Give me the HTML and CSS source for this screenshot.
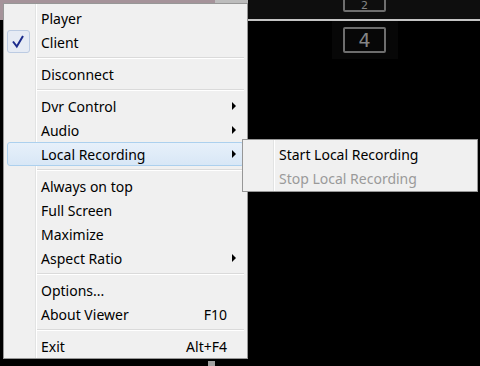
FILE: index.html
```html
<!DOCTYPE html>
<html lang="en">
<head>
  <meta charset="UTF-8" />
  <meta name="viewport" content="width=device-width, initial-scale=1.0" />
  <title>Viewer</title>
  <link rel="stylesheet" href="styles.css">
</head>
<body>
  <div class="screen">
    <!-- video frame behind the menu -->
    <div class="frame-strip"></div>
    <div class="frame-strip-light"></div>
    <div class="channel-bar"></div>
    <div class="channel-glow"></div>
    <div class="channel ch-2">2</div>
    <div class="channel ch-4">4</div>
    <div class="frame-tab"></div>

    <ul class="menu main-menu">
      <li class="item">Player</li>
      <li class="item">
        <span class="check">
          <svg width="23" height="23" viewBox="0 0 23 23"><path d="M6 11.5 L9.8 16.5 L16 6" fill="none" stroke="#1b2b8c" stroke-width="2" stroke-linejoin="miter"/></svg>
        </span>
        Client
      </li>
      <li class="sep"></li>
      <li class="item">Disconnect</li>
      <li class="sep"></li>
      <li class="item has-sub">Dvr Control</li>
      <li class="item has-sub">Audio</li>
      <li class="item has-sub active">Local Recording</li>
      <li class="sep"></li>
      <li class="item">Always on top</li>
      <li class="item">Full Screen</li>
      <li class="item">Maximize</li>
      <li class="item has-sub">Aspect Ratio</li>
      <li class="sep"></li>
      <li class="item">Options...</li>
      <li class="item"><span class="label">About Viewer</span><span class="shortcut">F10</span></li>
      <li class="sep"></li>
      <li class="item"><span class="label">Exit</span><span class="shortcut">Alt+F4</span></li>
    </ul>

    <ul class="menu sub-menu">
      <li class="item">Start Local Recording</li>
      <li class="item disabled">Stop Local Recording</li>
    </ul>
  </div>
</body>
</html>
```

FILE: styles.css
```css
/* Global */
body {
  margin: 0;
  padding: 0;
  background: #000;
  font-family: "Noto Sans", "Open Sans", sans-serif;
  font-size: 14px;
  color: #000;
}

.screen {
  position: relative;
  width: 480px;
  height: 366px;
  overflow: hidden;
  background: #000;
}

/* Video frame pieces */
.frame-strip {
  position: absolute;
  left: 0;
  top: 0;
  width: 215px;
  height: 20px;
  background: #a5939a;
}

.frame-strip-light {
  position: absolute;
  left: 215px;
  top: 0;
  width: 33px;
  height: 20px;
  background: #bdbdbd;
}

.channel-bar {
  position: absolute;
  left: 248px;
  top: 0;
  width: 232px;
  height: 19px;
  background: #0e0e0e;
  border-bottom: 2px solid #c4c4c4;
}

.channel-glow {
  position: absolute;
  left: 332px;
  top: 21px;
  width: 66px;
  height: 38px;
  background: #070707;
}

.channel {
  position: absolute;
  left: 343px;
  width: 43px;
  border: 2px solid #6e6e6e;
  border-radius: 2px;
  box-sizing: border-box;
  color: #858585;
  font-family: "DejaVu Sans", sans-serif;
  font-size: 19px;
  text-align: center;
}

.ch-2 {
  top: -2px;
  height: 14px;
  font-size: 11px;
  line-height: 11px;
}

.ch-4 {
  top: 27px;
  height: 26px;
  line-height: 22px;
}

.frame-tab {
  position: absolute;
  left: 208px;
  top: 361px;
  width: 7px;
  height: 5px;
  background: #a0a0a0;
}

/* Menus */
.menu {
  position: absolute;
  list-style: none;
  margin: 0;
  box-sizing: border-box;
  background: #f0f0f0;
  border: 1px solid #979797;
}

.menu::before {
  content: '';
  position: absolute;
  top: 0;
  bottom: 0;
  left: 31px;
  width: 1px;
  background: #e2e3e3;
  box-shadow: 1px 0 0 #fff;
}

.main-menu {
  left: 3px;
  top: 3px;
  width: 245px;
  padding: 2px 3px 0 3px;
}

.sub-menu {
  left: 242px;
  top: 139px;
  width: 236px;
  padding: 2px 3px 1px 3px;
}

.sub-menu::before {
  left: 30px;
}

.item {
  position: relative;
  display: flex;
  height: 24px;
  line-height: 23px;
  padding: 0 16px 0 33px;
  border: 1px solid transparent;
  border-radius: 3px;
  box-sizing: border-box;
  white-space: nowrap;
}

.sub-menu .item {
  padding-left: 32px;
}

.item .label {
  flex: 1;
}

.item .shortcut {
  text-align: right;
}

.item.active {
  background: linear-gradient(to bottom, #e7f0fa, #d8e7f6);
  border-color: #acd0ee;
}

.item.disabled {
  color: #9a9a9a;
}

/* Submenu arrow */
.has-sub::after {
  content: '';
  position: absolute;
  right: 7px;
  top: 7px;
  width: 0;
  height: 0;
  border-left: 4px solid #000;
  border-top: 4px solid transparent;
  border-bottom: 4px solid transparent;
}

/* Checked item */
.check {
  position: absolute;
  left: -1px;
  top: -1px;
  width: 23px;
  height: 23px;
  box-sizing: border-box;
  background: #e6ebf4;
  border: 1px solid #bccbe2;
  border-radius: 3px;
}

.check svg {
  position: absolute;
  left: -1px;
  top: -1px;
}

/* Separator */
.sep {
  height: 8px;
  margin-left: 30px;
  position: relative;
}

.sep::after {
  content: '';
  position: absolute;
  left: 0;
  right: 0;
  top: 3px;
  height: 1px;
  background: #dadada;
  border-bottom: 1px solid #fff;
}
```
